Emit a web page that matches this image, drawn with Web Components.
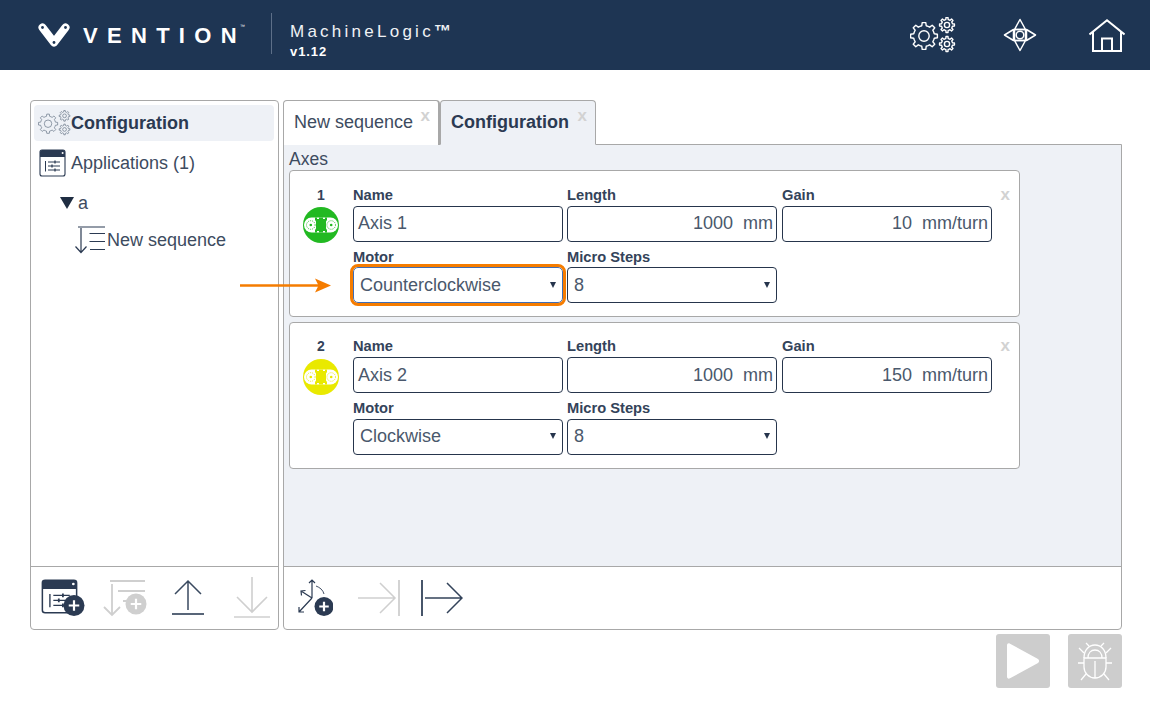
<!DOCTYPE html>
<html><head><meta charset="utf-8"><style>
html,body{margin:0;padding:0;background:#fff;font-family:"Liberation Sans",Arial,sans-serif;color:#33435a}
</style></head><body>
<vn-app></vn-app>
<script>
function gear(cx,cy,R,r,hole,n){
  n=n||8;let d='';const st=Math.PI*2/n;
  for(let i=0;i<n;i++){
    const a=i*st-Math.PI/2;
    const pts=[[r,a-st*.5],[r,a-st*.27],[R,a-st*.17],[R,a+st*.17],[r,a+st*.27]];
    pts.forEach((p,k)=>{d+=(i==0&&k==0?'M':'L')+(cx+p[0]*Math.cos(p[1])).toFixed(2)+' '+(cy+p[0]*Math.sin(p[1])).toFixed(2)});
  }
  d+='Z';
  return `<path d="${d}" stroke-linejoin="round"/><circle cx="${cx}" cy="${cy}" r="${hole}"/>`;
}
const gears=gear(14,19,13.5,10.5,5.2,8)+gear(37,8,7.5,5.6,2.6,8)+gear(37,27,7.5,5.6,2.6,8);
const belt=(c)=>`<circle cx="18" cy="18" r="18" fill="${c}"/><rect x="1" y="10.500" width="34" height="15" rx="7.500" fill="#fff"/><path d="M12 10.500h2v1.500h2v-1.500h4v1.500h2v-1.500h2v2.500l-1 1.500v7l1 1.500v2.500h-2v-1.500h-2v1.500h-4v-1.500h-2v1.500h-2v-2.500l1-1.500v-7l-1-1.500z" fill="${c}"/><circle cx="7.800" cy="18" r="4.300" fill="none" stroke="${c}" stroke-width=".8" stroke-dasharray="1.200 .9"/><circle cx="28.200" cy="18" r="4.300" fill="none" stroke="${c}" stroke-width=".8" stroke-dasharray="1.200 .9"/><circle cx="7.800" cy="18" r="1.300" fill="${c}"/><circle cx="28.200" cy="18" r="1.300" fill="${c}"/>`;
const plus=(cx,cy,r,bg)=>`<circle cx="${cx}" cy="${cy}" r="${r}" fill="${bg}"/><path d="M${cx-r*.5} ${cy}h${r}M${cx} ${cy-r*.5}v${r}" stroke="#fff" stroke-width="2.2" fill="none"/>`;
const appBody=`<rect x="1" y="1" width="25" height="26" rx="2" fill="#fff" stroke="#2b3a52" stroke-width="1.1"/><path d="M1 8V3a2 2 0 0 1 2-2h21a2 2 0 0 1 2 2v5z" fill="#2b3a52"/><circle cx="23.6" cy="4" r="1" fill="#fff"/><g stroke="#2b3a52" stroke-width="1" fill="none"><path d="M6.5 12v10.5M9 13h12M9 17h12M9 21h12"/><path d="M16 11.5v3M13 15.5v3M16 19.5v3" stroke-width="1.3"/></g>`;
const ICONS={
  logo:[32,24,`<path d="M4.5 4.5 16 19.5 27.5 4.5" fill="none" stroke="#fff" stroke-width="8" stroke-linecap="round" stroke-linejoin="round"/><circle cx="4.5" cy="4.5" r="1.4" fill="#1e3553"/><circle cx="27.5" cy="4.5" r="1.4" fill="#1e3553"/><circle cx="16" cy="19.5" r="1.4" fill="#1e3553"/>`],
  gearsW:[46,36,`<g fill="none" stroke="#fff" stroke-width="1.4">${gears}</g>`],
  gearsG:[46,36,`<g fill="none" stroke="#6b788a" stroke-width="1">${gears}</g>`],
  nav:[34,34,`<g fill="none" stroke="#fff" stroke-width="1.5" stroke-linejoin="round"><path d="M17 1.5 22.5 11.5H11.5zM17 32.5 11.5 22.5H22.5zM1.5 17 10.5 11.5V22.5zM32.5 17 23.5 11.5V22.5z"/><rect x="11.5" y="11.5" width="11" height="11"/><circle cx="17" cy="17" r="3.8"/></g>`],
  home:[36,33,`<g fill="none" stroke="#fff" stroke-width="2"><path d="M.5 15.5 18 1.3 35.5 15.5"/><path d="M4 13V32H32V13"/><path d="M13 32V19.5H23V32"/></g>`],
  app:[27,28,appBody],
  seq:[30,28,`<g fill="none" stroke="#2b3a52" stroke-width="1.2"><path d="M3 1H30M14.500 7.500H30M14.500 15.500H30M15 23.500H30"/><path d="M6 2V26.500M.5 20.500 6 26.500l5.500-6"/></g>`],
  appPlus:[44,38,`<g transform="scale(1.37 1.25)">${appBody}</g>`+plus(33,26.5,10.5,'#2b3a52')],
  seqPlus:[44,38,`<g fill="none" stroke="#cfcfcf" stroke-width="1.8"><path d="M7 2H42M15 12H42M20 22H28"/><path d="M9 5V36M1 28 9 36l8-8"/></g>`+plus(33,25,10.5,'#cfcfcf')],
  up:[32,38,`<g fill="none" stroke="#3a4a60" stroke-width="1.5"><path d="M16 2V31M3 15 16 2 29 15"/><path d="M0 35H32" stroke-width="1.7"/></g>`],
  down:[38,42,`<g fill="none" stroke="#cfcfcf" stroke-width="1.6"><path d="M19 0V35M4 20 19 35 34 20"/><path d="M1 40H37"/></g>`],
  axes:[36,38,`<g fill="none" stroke="#2b3a52" stroke-width="1.200"><path d="M15 19V1M12 4 15 1l3 3M15 19 2 33M2 28v5h5M15 19 4 12M4.500 16.500 4 12l4.500-.5"/><path d="M19 7c4 1.500 7 4 8 8" stroke-width=".9"/></g>`+plus(27,27.500,9.500,'#2b3a52')],
  toBar:[42,36,`<g fill="none" stroke="#cfcfcf" stroke-width="1.5"><path d="M0 18H37M22 3 37 18 22 33"/><path d="M41 0V36" stroke-width="1.8"/></g>`],
  fromBar:[42,36,`<g fill="none" stroke="#33435a" stroke-width="1.5"><path d="M4 18H41M26 3 41 18 26 33"/><path d="M1 0V36" stroke-width="1.8"/></g>`],
  play:[34,38,`<path d="M1 3.500C1 1.500 2.500.8 4 1.700L32 17c1.500 1 1.500 3 0 4L4 36.300C2.500 37.200 1 36.500 1 34.500z" fill="#fff"/>`],
  bug:[34,40,`<g fill="none" stroke="#fff" stroke-width="1.300"><path d="M6 17C6 9 11 4 17 4s11 5 11 13"/><path d="M10 17c0-5 3-8 7-8s7 3 7 8"/><path d="M6 17H28V26a11 11 0 0 1-22 0z"/><path d="M17 20V37M11 5 8 2M23 5l3-3M6 12 1 7M28 12l5-5M6 22H0M28 22h6M8 33l-5 6M26 33l5 6"/></g>`]
};
class VnIcon extends HTMLElement{
  constructor(){super();this.attachShadow({mode:'open'})}
  connectedCallback(){
    const [w,h,body]=ICONS[this.getAttribute('name')];
    const W=this.getAttribute('w')||w,H=this.getAttribute('h')||h;
    this.shadowRoot.innerHTML=`<style>:host{display:block;flex:none;width:${W}px;height:${H}px}svg{display:block;width:100%;height:100%}</style><svg viewBox="0 0 ${w} ${h}">${body}</svg>`;
  }
}
customElements.define('vn-icon',VnIcon);

class VnHeader extends HTMLElement{
  constructor(){super();this.attachShadow({mode:'open'}).innerHTML=`<style>
  :host{display:flex;align-items:center;height:70px;background:#1e3553;color:#fff;padding-left:38px;box-sizing:border-box}
  .brand{font-weight:700;font-size:22px;margin-left:13px;line-height:24px;position:relative;top:1px;width:156px;white-space:nowrap}
  .brand span.s{letter-spacing:9.3px}
  .tm{position:absolute;left:157px;top:-2px;font-size:5px;letter-spacing:0;line-height:8px;font-weight:400}
  .div{width:1px;height:41px;background:#5d6f88;margin-left:32px;position:relative;top:-2px}
  .name{margin-left:18px;width:620px;padding-top:10px}
  .t{font-size:17px;letter-spacing:3.25px;line-height:20px;font-weight:400;color:#f0f2f5;white-space:nowrap}
  .t b{font-size:17px;letter-spacing:0}
  .v{font-size:13px;font-weight:700;letter-spacing:.9px;line-height:15px;margin-top:2px}
  .icons{display:flex;align-items:center}
  </style>
  <vn-icon name="logo" w="32" h="24"></vn-icon><div class="brand"><span class="s">VENTIO</span>N<span class="tm">™</span></div><div class="div"></div>
  <div class="name"><div class="t">MachineLogic<b>™</b></div><div class="v">v1.12</div></div>
  <div class="icons"><vn-icon name="gearsW"></vn-icon><vn-icon name="nav" style="margin-left:47px"></vn-icon><vn-icon name="home" style="margin-left:52px"></vn-icon></div>`}
}
customElements.define('vn-header',VnHeader);

class VnTree extends HTMLElement{
  constructor(){super();this.attachShadow({mode:'open'}).innerHTML=`<style>
  :host{display:flex;flex-direction:column;width:249px;box-sizing:border-box;border:1px solid #a8a8a8;border-radius:4px;background:#fff;font-size:18px;color:#3d4b60}
  .list{flex:1;padding:4px 4px 0 3px}
  .row{display:flex;align-items:center;white-space:nowrap}
  .cfg{height:36px;background:#eef1f6;border-radius:4px;padding-left:4px;font-weight:700;color:#2b3a52;margin-bottom:6px}
  .apps{height:32px;padding-left:5px}.apps span{margin-left:5px}
  .a{height:36px;padding-left:26px;margin-top:6px}.a i{width:0;height:0;border:7px solid transparent;border-top:12px solid #1f2d42;border-bottom:0;margin-right:4px}
  .seq{height:36px;padding-left:41px;margin-top:1px}.seq span{margin-left:2px}
  .bar{height:63px;box-sizing:border-box;border-top:1px solid #a8a8a8;display:flex;align-items:center;padding-left:10px}
  </style>
  <div class="list">
   <div class="row cfg"><vn-icon name="gearsG" w="33" h="26"></vn-icon><span>Configuration</span></div>
   <div class="row apps"><vn-icon name="app"></vn-icon><span>Applications (1)</span></div>
   <div class="row a"><i></i><span>a</span></div>
   <div class="row seq"><vn-icon name="seq"></vn-icon><span>New sequence</span></div>
  </div>
  <div class="bar"><vn-icon name="appPlus"></vn-icon><vn-icon name="seqPlus" style="margin-left:18px"></vn-icon><vn-icon name="up" style="margin-left:25px"></vn-icon><vn-icon name="down" style="margin-left:29px"></vn-icon></div>`}
}
customElements.define('vn-tree',VnTree);

class VnField extends HTMLElement{
  constructor(){super();this.attachShadow({mode:'open'})}
  connectedCallback(){
    const sel=this.hasAttribute('select'),al=this.hasAttribute('right');
    this.shadowRoot.innerHTML=`<style>
    :host{display:block;width:210px}
    .l{font-size:14.7px;font-weight:700;line-height:15px;height:18px;color:#33435a;white-space:nowrap;position:relative;top:${sel?'var(--sl,0px)':'0'}}
    .b{box-sizing:border-box;height:36px;border:1px solid #26354c;border-radius:4px;background:#fff;font-size:18px;color:#4a586c;display:flex;align-items:center;white-space:pre;padding:0 ${sel?'6px var(--sb,0px) 6px':'3px var(--ib,0px) 4px'};justify-content:${al?'flex-end':'flex-start'}}
    :host([focus]) .b{outline:3.5px solid #f57c00;outline-offset:0;border-color:#3f6db5;border-radius:5px}
    .c{margin-left:auto;width:0;height:0;border:3px solid transparent;border-top:6px solid #26354c;border-bottom:0}
    </style><div class="l">${this.getAttribute('label')}</div><div class="b"><span>${this.getAttribute('value')}</span>${sel?'<i class="c"></i>':''}</div>`;
  }
}
customElements.define('vn-field',VnField);

class VnAxis extends HTMLElement{
  constructor(){super();this.attachShadow({mode:'open'})}
  connectedCallback(){
    const n=this.getAttribute('n'),c=this.getAttribute('color');
    ICONS['belt'+n]=[36,36,belt(c)];
    const first=n==='1';
    this.shadowRoot.innerHTML=`<style>
    :host{display:flex;box-sizing:border-box;width:731px;height:147px;border:1px solid #a8a8a8;border-radius:4px;background:#fff;padding:${first?17:16}px 0 0 13px;position:relative;--ib:${first?2:0}px;--sb:${first?0:2}px;--sl:${first?1:0}px}
    .id{width:36px;margin-right:14px;text-align:center;font-size:14px;font-weight:700;line-height:15px;color:#33435a;flex:none}
    .id vn-icon{margin-top:${first?4:5}px}
    .g{display:grid;grid-template-columns:214px 215px 210px;row-gap:${first?7:8}px;align-content:start}
    .x{position:absolute;right:9px;top:${first?14:13}px;font-size:17px;font-weight:700;color:#d2d2d2;line-height:20px}
    </style><div class="id">${n}<vn-icon name="belt${n}"></vn-icon></div><div class="g"><slot></slot></div><span class="x">x</span>`;
  }
}
customElements.define('vn-axis',VnAxis);

class VnEditor extends HTMLElement{
  constructor(){super();this.attachShadow({mode:'open'}).innerHTML=`<style>
  :host{display:flex;flex-direction:column;flex:1;min-width:0}
  .tabs{display:flex;height:45px;margin-bottom:-1px;position:relative;z-index:1;padding-left:0}
  .tab{box-sizing:border-box;height:45px;border:1px solid #a8a8a8;border-bottom:0;border-radius:4px 4px 0 0;font-size:18px;display:flex;padding:11px 0 0 10px;line-height:20px;position:relative;color:#3d4b60;white-space:nowrap}
  .tab.n{width:157px;background:#fff;border-right:2px solid #a8a8a8;margin-right:0}
  .tab.c{width:156px;background:#eef1f6;font-weight:700;color:#2b3a52;border-bottom:1px solid #eef1f6}
  .tab u{position:absolute;right:8px;top:5px;text-decoration:none;font-weight:700;font-size:17px;color:#d2d2d2;line-height:20px}
  .main{flex:1;display:flex;flex-direction:column;border:1px solid #a8a8a8;border-radius:0 0 4px 4px;background:#fff;min-height:0}
  .content{flex:1;background:#eef1f6;padding:4px 0 0 5px;box-sizing:border-box;min-height:0}
  h2{margin:0 0 1px;font-size:17.500px;font-weight:400;line-height:20px;color:#3d4b60}
  .cards{display:flex;flex-direction:column;gap:5px}
  .bar{height:63px;box-sizing:border-box;border-top:1px solid #a8a8a8;display:flex;align-items:center;padding-left:13px}
  </style>
  <div class="tabs"><div class="tab n">New sequence<u>x</u></div><div class="tab c">Configuration<u>x</u></div></div>
  <div class="main"><div class="content"><h2>Axes</h2><div class="cards"><slot></slot></div></div>
  <div class="bar"><vn-icon name="axes"></vn-icon><vn-icon name="toBar" style="margin-left:25px"></vn-icon><vn-icon name="fromBar" style="margin-left:21px"></vn-icon></div></div>`}
}
customElements.define('vn-editor',VnEditor);

class VnRunBtn extends HTMLElement{
  constructor(){super();this.attachShadow({mode:'open'})}
  connectedCallback(){
    const i=this.getAttribute('icon');
    this.shadowRoot.innerHTML=`<style>:host{display:flex;align-items:center;justify-content:center;width:54px;height:54px;background:#cdcdcd;border-radius:3px}</style><vn-icon name="${i}"></vn-icon>`;
  }
}
customElements.define('vn-run-btn',VnRunBtn);

class VnApp extends HTMLElement{
  constructor(){super();this.attachShadow({mode:'open'}).innerHTML=`<style>
  :host{display:block;position:relative;width:1150px;height:719px;overflow:hidden;background:#fff}
  .work{display:flex;gap:4px;height:530px;box-sizing:border-box;margin:30px 28px 0 30px}
  .run{display:flex;justify-content:flex-end;gap:18px;margin:4px 28px 0 0}
  .arrow{position:absolute;left:240px;top:278px}
  </style>
  <vn-header></vn-header>
  <div class="work"><vn-tree></vn-tree>
   <vn-editor>
    <vn-axis n="1" color="#22b922">
     <vn-field label="Name" value="Axis 1"></vn-field><vn-field label="Length" value="1000  mm" right></vn-field><vn-field label="Gain" value="10  mm/turn" right></vn-field>
     <vn-field label="Motor" value="Counterclockwise" select focus></vn-field><vn-field label="Micro Steps" value="8" select></vn-field>
    </vn-axis>
    <vn-axis n="2" color="#e9e900">
     <vn-field label="Name" value="Axis 2"></vn-field><vn-field label="Length" value="1000  mm" right></vn-field><vn-field label="Gain" value="150  mm/turn" right></vn-field>
     <vn-field label="Motor" value="Clockwise" select></vn-field><vn-field label="Micro Steps" value="8" select></vn-field>
    </vn-axis>
   </vn-editor>
  </div>
  <div class="run"><vn-run-btn icon="play"></vn-run-btn><vn-run-btn icon="bug"></vn-run-btn></div>
  <svg class="arrow" width="91" height="15" viewBox="0 0 91 15"><path d="M0 7.500H80" stroke="#f57c00" stroke-width="2.600"/><path d="M75 .5 91 7.500 75 14.500 78.500 7.500z" fill="#f57c00"/></svg>`}
}
customElements.define('vn-app',VnApp);
</script>
</body></html>
